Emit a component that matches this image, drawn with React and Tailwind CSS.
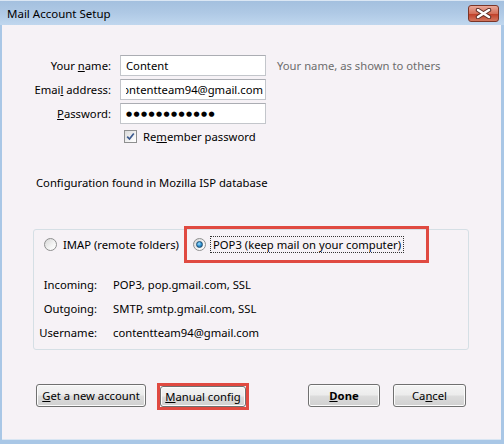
import React from 'react'

function Radio({ checked }) {
  return (
    <span className="relative flex items-center justify-center w-[13px] h-[13px] rounded-full border border-[#8e8f8f] bg-[linear-gradient(135deg,#d6d6d6,#f4f4f4_60%,#ffffff)] shrink-0">
      {checked && (
        <span className="w-[7px] h-[7px] rounded-full border border-[#1c4e74] bg-[radial-gradient(circle_at_40%_35%,#a5e1ff,#3a9bd9_45%,#0c4f85)]" />
      )}
    </span>
  )
}

function Checkbox() {
  return (
    <span className="flex items-center justify-center w-[13px] h-[13px] border border-[#8e8f8f] bg-[linear-gradient(135deg,#dadada,#f6f6f6_70%,#ffffff)] shrink-0">
      <svg width="9" height="9" viewBox="0 0 9 9">
        <path d="M1.2 4.6 L3.5 7 L7.8 1.5" fill="none" stroke="#3c5a8e" strokeWidth="1.7" />
      </svg>
    </span>
  )
}

function Button({ children, className = '', bold = false }) {
  return (
    <button className={`flex items-center justify-center rounded-[3px] border border-[#707070] bg-[linear-gradient(to_bottom,#f4f4f4_0%,#ececec_48%,#dcdcdc_52%,#d0d0d0_100%)] shadow-[inset_0_0_0_1px_#fcfcfc] text-black ${bold ? 'font-bold' : ''} ${className}`}>
      {children}
    </button>
  )
}

function Field({ children }) {
  return (
    <div className="h-[21px] flex items-center border border-[#c3c6cb] border-t-[#abadb3] bg-white px-[5px] overflow-hidden">
      {children}
    </div>
  )
}

export default function App() {
  return (
    <div className="w-[504px] h-[444px] flex flex-col bg-[#a9c7e6] font-['Noto_Sans','DejaVu_Sans',sans-serif] text-[11.25px] text-black leading-[16px]">
      {/* title bar */}
      <div className="h-[25px] flex items-center justify-between pl-[7px] pr-[5px] bg-[linear-gradient(to_bottom,#a4c0df,#afc9e5_50%,#c0d7ee)] border-t border-[#dbe7f4]">
        <span className="text-[11.5px] pt-[2px]">Mail Account Setup</span>
        <div className="w-[31px] h-[17px] mt-[1px] flex items-center justify-center rounded-[3px] border border-[#7b3527] bg-[linear-gradient(to_bottom,#e9a99a,#d4705a_50%,#c1412a_55%,#d3775f)]">
          <svg width="17" height="11" viewBox="0 0 17 11">
            <path d="M3 2 L14 9 M14 2 L3 9" stroke="#5a2a22" strokeWidth="4.4" strokeLinecap="round" />
            <path d="M3 2 L14 9 M14 2 L3 9" stroke="#ffffff" strokeWidth="2.6" strokeLinecap="round" />
          </svg>
        </div>
      </div>

      {/* client area */}
      <div className="flex-1 flex flex-col bg-[#f6f2f6] ml-[2px] mr-[3px] mb-[4px] border-b border-[#d9e6f3]">
        {/* account fields */}
        <div className="grid grid-cols-[109px_146px_1fr] gap-x-[9px] gap-y-[3px] mt-[30px] items-center">
          <span className="text-right">Your <u>n</u>ame:</span>
          <Field>Content</Field>
          <span className="pl-[2px] text-[#6d6d6d]">Your name, as shown to others</span>

          <span className="text-right">Emai<u>l</u> address:</span>
          <Field>
            <div className="flex-1 flex justify-end overflow-hidden whitespace-nowrap -mr-[3px]">
              <span className="shrink-0">contentteam94@gmail.com</span>
            </div>
          </Field>
          <span />

          <span className="text-right"><u>P</u>assword:</span>
          <Field>
            <span className="text-[7px] tracking-[1.4px] leading-none">●●●●●●●●●●●●</span>
          </Field>
          <span />

          <span />
          <label className="flex items-center gap-[6px] h-[19px] pl-[4px] whitespace-nowrap">
            <Checkbox />
            <span>Re<u>m</u>ember password</span>
          </label>
          <span />
        </div>

        <div className="ml-[34px] mt-[29px]">Configuration found in Mozilla ISP database</div>

        {/* server settings group */}
        <div className="ml-[31px] mt-[38px] w-[436px] h-[121px] rounded-[3px] border border-[#d5dfe5] flex flex-col">
          <div className="flex items-center -mt-[4px]">
            <label className="flex items-center gap-[6px] pl-[10px] w-[150px] whitespace-nowrap">
              <Radio />
              <span>IMAP (remote folders)</span>
            </label>
            <div className="h-[37px] w-[245px] border-[3px] border-[#e04a41] flex items-center pl-[6px]">
              <Radio checked />
              <span className="ml-[4px] px-[2px] border border-dotted border-[#333] leading-[15px] whitespace-nowrap">POP3 (keep mail on your computer)</span>
            </div>
          </div>

          <div className="grid grid-cols-[63px_1fr] gap-x-[16px] mt-[10px]">
            <span className="text-right h-[24px] flex items-center justify-end">Incoming:</span>
            <span className="h-[24px] flex items-center">POP3, pop.gmail.com, SSL</span>
            <span className="text-right h-[24px] flex items-center justify-end">Outgoing:</span>
            <span className="h-[24px] flex items-center">SMTP, smtp.gmail.com, SSL</span>
            <span className="text-right h-[23px] flex items-center justify-end">Username:</span>
            <span className="h-[23px] flex items-center">contentteam94@gmail.com</span>
          </div>
        </div>

        {/* buttons */}
        <div className="flex items-start ml-[34px] mt-[33px]">
          <Button className="w-[110px] h-[23px] mt-[1px]"><u>G</u>et a new account</Button>
          <div className="ml-[11px] w-[92px] h-[27px] border-[3px] border-[#e04a41] flex">
            <Button className="flex-1"><u>M</u>anual config</Button>
          </div>
          <Button bold className="ml-[59px] w-[72px] h-[23px] mt-[1px]"><u>D</u>one</Button>
          <Button className="ml-[13px] w-[73px] h-[23px] mt-[1px]">Ca<u>n</u>cel</Button>
        </div>
      </div>
    </div>
  )
}
